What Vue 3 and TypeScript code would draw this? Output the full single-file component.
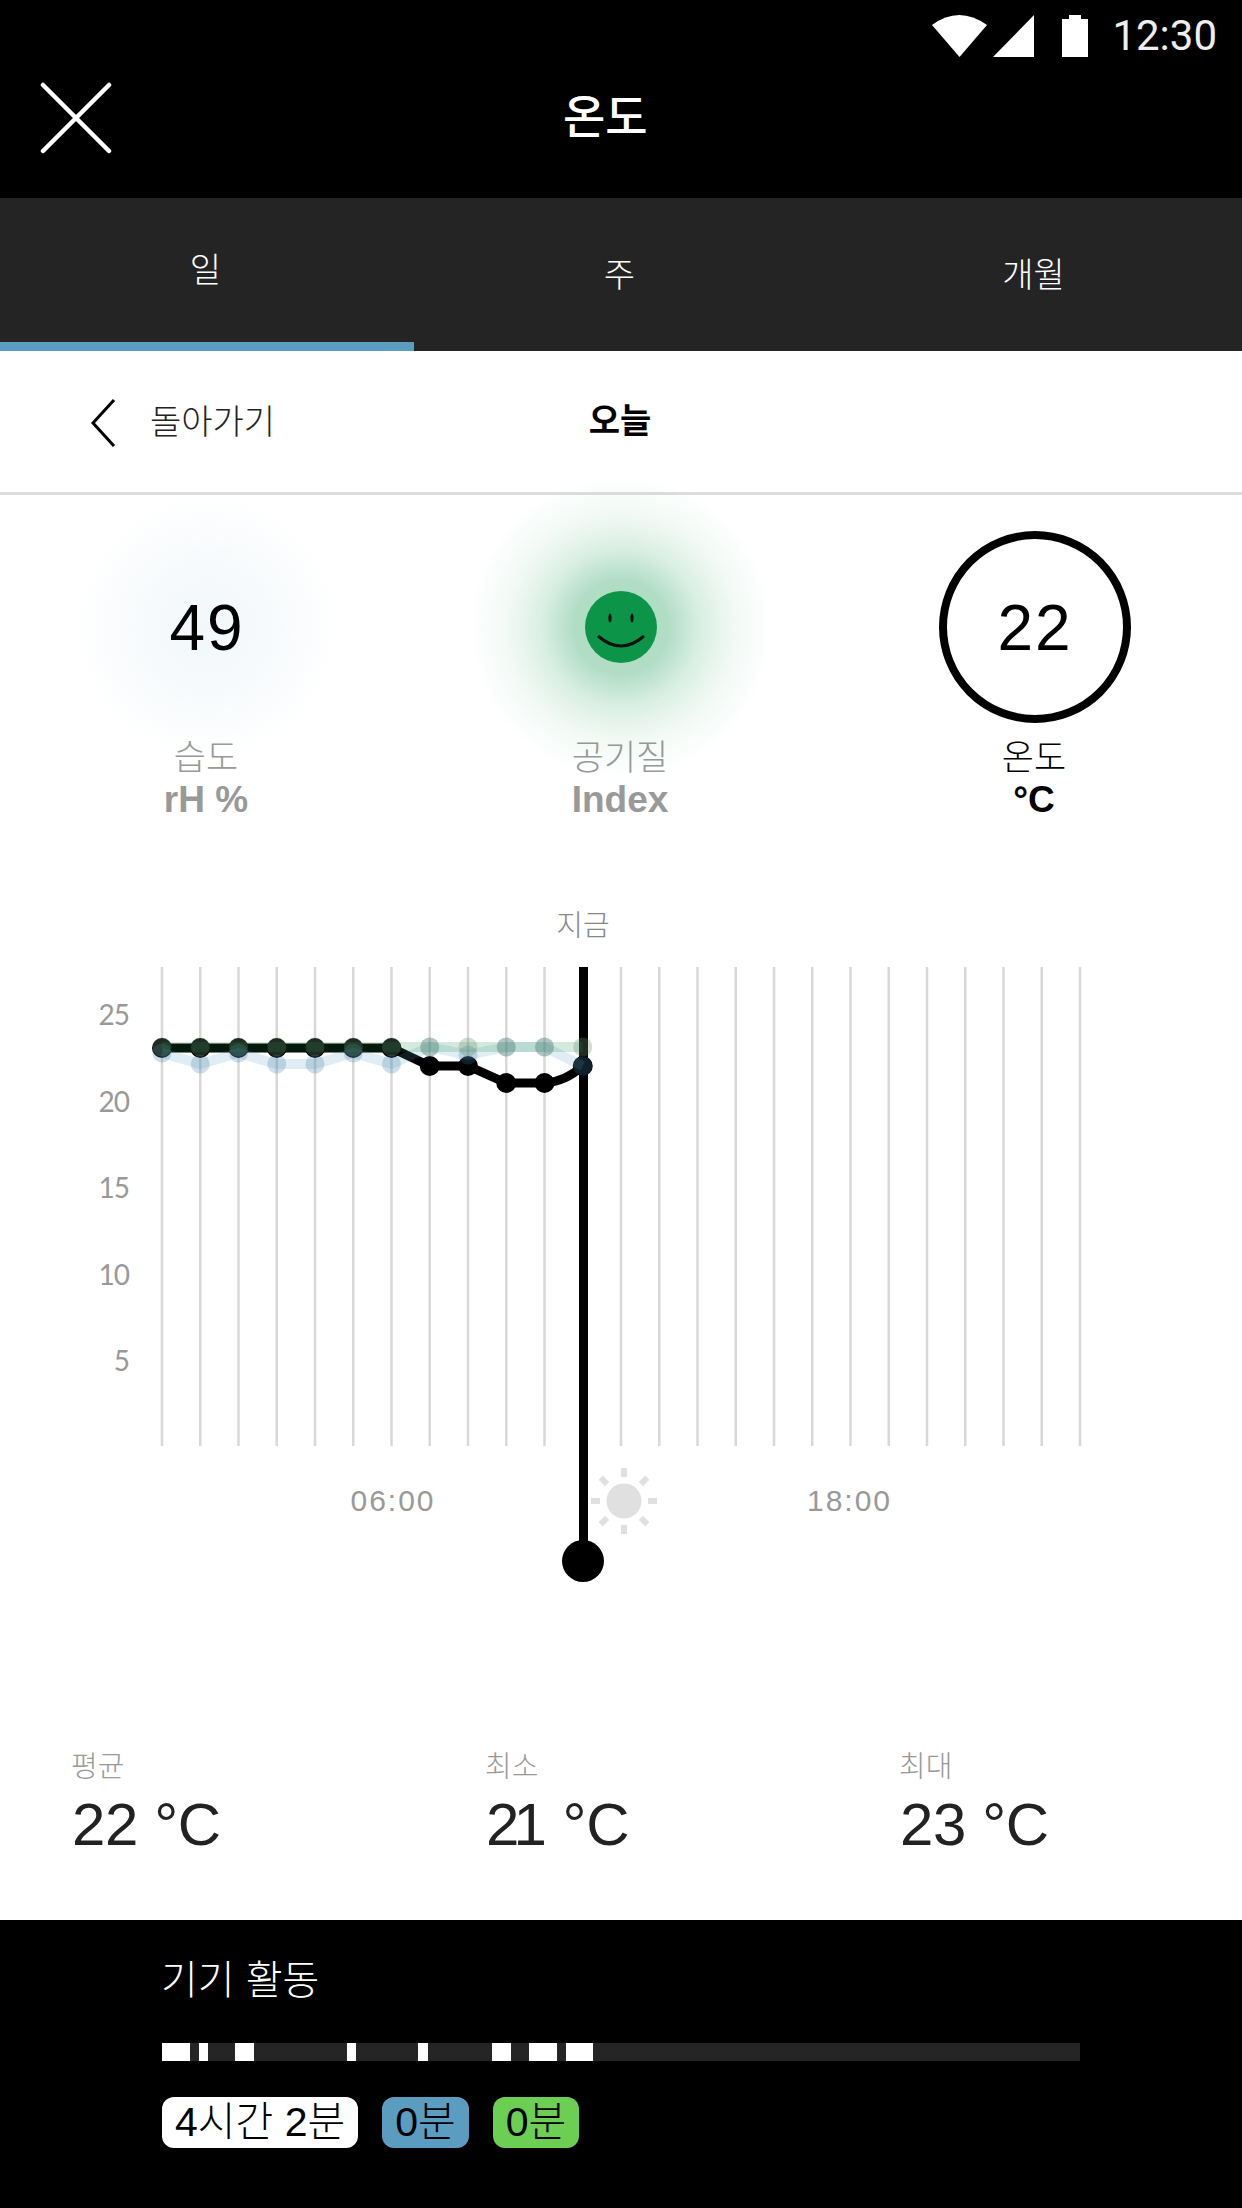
<script setup lang="ts">
const gridX: number[] = Array.from({ length: 25 }, (_, i) => 162 + i * 38.25)
const ptX = gridX.slice(0, 12)
const toY = (pix: number[]) => pix.map((y, i) => ({ x: ptX[i], y }))
const black = toY([1048, 1048, 1048, 1048, 1048, 1048, 1048, 1066, 1066, 1083, 1083, 1066])
const blue = toY([1053, 1064, 1053, 1064, 1064, 1053, 1064, 1047, 1055, 1047, 1047, 1066])
const green = toY(Array(12).fill(1047))
const pts = (a: { x: number; y: number }[]) => a.map((p) => `${p.x},${p.y}`).join(' ')
const blackPath = (() => {
  const a = black.slice(0, 11)
  const last = black[11]
  return 'M' + a.map((p) => `${p.x} ${p.y}`).join(' L') + ` Q${last.x - 18} ${last.y + 16} ${last.x} ${last.y}`
})()
const yLabels = [
  { t: '25', y: 1014 },
  { t: '20', y: 1101 },
  { t: '15', y: 1187 },
  { t: '10', y: 1274 },
  { t: '5', y: 1360 },
]
const rays = [0, 45, 90, 135, 180, 225, 270, 315]
const stats = [
  { label: '평균', lead: '2', value: '2 °C', kern: false },
  { label: '최소', lead: '2', value: '1 °C', kern: true },
  { label: '최대', lead: '2', value: '3 °C', kern: false },
]
const segments = [
  [162, 190], [199, 208], [235, 254], [347, 356], [418, 428], [492, 511], [529, 557], [566, 593],
]
const segStyle = (s: number[]) => ({ left: `${s[0] - 162}px`, width: `${s[1] - s[0]}px` })
</script>

<template>
  <div class="screen">
    <header class="top">
      <div class="status">
        <svg class="status-icons" width="156" height="42" viewBox="0 0 156 42">
          <path d="M0 10 Q27 -10 55 10 L27.5 42 Z" fill="#fff" />
          <path d="M61 42 L102 0 V42 Z" fill="#fff" />
          <path d="M130 42 V4 H137 V0 H149 V4 H156 V42 Z" fill="#fff" />
        </svg>
        <span class="clock">12:30</span>
      </div>
      <div class="titlebar">
        <svg class="close" width="72" height="72" viewBox="0 0 72 72">
          <path d="M3 3 L69 69 M69 3 L3 69" stroke="#fff" stroke-width="4.5" stroke-linecap="round" />
        </svg>
        <h1 class="title">온도</h1>
      </div>
    </header>

    <nav class="tabs">
      <div class="tab active">일<i class="tab-bar"></i></div>
      <div class="tab">주</div>
      <div class="tab">개월</div>
    </nav>

    <div class="dayrow">
      <div class="back">
        <svg width="26" height="48" viewBox="0 0 26 48">
          <path d="M24 1 L3 24 L24 47" fill="none" stroke="#000" stroke-width="3" />
        </svg>
        <span class="back-text">돌아가기</span>
      </div>
      <div class="today">오늘</div>
    </div>

    <section class="metrics">
      <div class="metric">
        <div class="dial glow-blue"><span class="num">49</span></div>
        <div class="m-label">습도</div>
        <div class="m-unit">rH %</div>
      </div>
      <div class="metric">
        <div class="dial glow-green">
          <svg class="face" width="72" height="72" viewBox="0 0 72 72">
            <circle cx="36" cy="36" r="36" fill="#0c9549" />
            <ellipse cx="25" cy="27" rx="1.6" ry="4.5" fill="#111" />
            <ellipse cx="47" cy="27" rx="1.6" ry="4.5" fill="#111" />
            <path d="M13 45 Q36 65 59 45" fill="none" stroke="#111" stroke-width="3" />
          </svg>
        </div>
        <div class="m-label">공기질</div>
        <div class="m-unit">Index</div>
      </div>
      <div class="metric on">
        <div class="dial ring"><span class="num">22</span></div>
        <div class="m-label">온도</div>
        <div class="m-unit">°C</div>
      </div>
    </section>

    <svg class="chart" width="1242" height="700" viewBox="0 900 1242 700">
      <text x="583" y="936" class="now-label" text-anchor="middle">지금</text>
      <line v-for="x in gridX" :key="x" :x1="x" :x2="x" y1="967" y2="1446" stroke="#d8d8d8" stroke-width="2.5" />
      <text v-for="l in yLabels" :key="l.t" x="129" :y="l.y + 11" class="y-label" text-anchor="end">{{ l.t }}</text>

      <line x1="583.5" x2="583.5" y1="967" y2="1561" stroke="#000" stroke-width="9" />
      <circle cx="583" cy="1561" r="21" fill="#000" />

      <path :d="blackPath" fill="none" stroke="#000" stroke-width="9" />
      <circle v-for="p in black" :key="'k' + p.x" :cx="p.x" :cy="p.y" r="10" fill="#000" />

      <polyline class="tint-line" :points="pts(blue)" fill="none" stroke="#5b9dc0" stroke-width="10" />
      <circle v-for="p in blue" :key="'b' + p.x" class="dot-blue" :cx="p.x" :cy="p.y" r="9.5" fill="#3a80a8" />
      <polyline class="tint-line" :points="pts(green)" fill="none" stroke="#0c8a44" stroke-width="10" />
      <circle v-for="p in green" :key="'g' + p.x" class="dot-green" :cx="p.x" :cy="p.y" r="9.5" fill="#6a8f70" />

      <text x="393" y="1511" class="time" text-anchor="middle">06:00</text>
      <text x="849.5" y="1511" class="time" text-anchor="middle">18:00</text>

      <g transform="translate(624 1501)" fill="#e0e0e0">
        <circle r="17.5" />
        <rect v-for="r in rays" :key="r" x="-3" y="-33" width="6" height="9" :transform="`rotate(${r})`" />
      </g>
    </svg>

    <section class="stats">
      <div v-for="s in stats" :key="s.label" class="stat">
        <div class="stat-label">{{ s.label }}</div>
        <div class="stat-value"><span :class="{ kern: s.kern }">{{ s.lead }}</span>{{ s.value }}</div>
      </div>
    </section>

    <footer class="activity">
      <div class="act-title">기기 활동</div>
      <div class="act-bar">
        <i v-for="s in segments" :key="s[0]" class="act-seg" :style="segStyle(s)"></i>
      </div>
      <div class="pills">
        <span class="pill white">4시간 2분</span>
        <span class="pill blue">0분</span>
        <span class="pill green">0분</span>
      </div>
    </footer>
  </div>
</template>

<style scoped>
.screen {
  width: 1242px;
  height: 2208px;
  overflow: hidden;
  background: #fff;
  font-family: "Liberation Sans", "Noto Sans CJK KR", sans-serif;
  color: #000;
}
.top {
  height: 198px;
  background: #000;
  color: #fff;
}
.status {
  height: 72px;
  display: flex;
  justify-content: flex-end;
  padding: 15px 25px 0 0;
  box-sizing: border-box;
  gap: 24px;
}
.status-icons {
  display: block;
}
.clock {
  font-family: Roboto, sans-serif;
  font-size: 42px;
  line-height: 42px;
  color: #eee;
}
.titlebar {
  height: 126px;
  display: flex;
  align-items: flex-start;
  padding-left: 40px;
}
.close {
  display: block;
  margin-top: 10px;
}
.title {
  margin: 20px 0 0 451px;
  font-size: 46px;
  line-height: 50px;
  font-weight: 500;
}
.tabs {
  height: 153px;
  background: #242424;
  color: #fff;
  display: grid;
  grid-template-columns: repeat(3, 414px);
}
.tab {
  position: relative;
  text-align: center;
  font-size: 34px;
  line-height: 40px;
  font-weight: 300;
  padding: 57px 3px 0 0;
}
.tab.active {
  padding-top: 52px;
}
.tab-bar {
  position: absolute;
  left: 0;
  right: 0;
  bottom: 0;
  height: 9px;
  background: #5b9dc0;
}
.dayrow {
  height: 144px;
  box-sizing: border-box;
  border-bottom: 3px solid #ddd;
  position: relative;
  display: flex;
  align-items: center;
  justify-content: center;
}
.back {
  position: absolute;
  left: 90px;
  top: 48px;
  display: flex;
  align-items: center;
  gap: 34px;
  font-size: 34px;
  font-weight: 300;
  color: #222;
}
.back-text {
  margin-top: -8px;
}
.today {
  font-size: 34px;
  font-weight: 700;
  margin: 0 2px 6px 0;
}
.metrics {
  height: 405px;
  box-sizing: border-box;
  padding-top: 36px;
  display: grid;
  grid-template-columns: repeat(3, 414px);
  text-align: center;
}
.metric {
  display: flex;
  flex-direction: column;
  align-items: center;
  color: #999;
}
.metric.on {
  color: #000;
}
.dial {
  position: relative;
  width: 192px;
  height: 192px;
  box-sizing: border-box;
  display: flex;
  align-items: center;
  justify-content: center;
  margin-bottom: 13px;
  color: #000;
}
.glow-blue::before,
.glow-green::before {
  content: "";
  position: absolute;
  left: -54px;
  top: -54px;
  width: 300px;
  height: 300px;
  border-radius: 50%;
}
.glow-blue::before {
  background: radial-gradient(circle, rgba(91, 157, 192, 0.08) 0, rgba(91, 157, 192, 0.05) 30%, rgba(91, 157, 192, 0) 62%);
}
.glow-green::before {
  background: radial-gradient(circle, rgba(12, 149, 73, 0.32) 22%, rgba(12, 149, 73, 0.15) 38%, rgba(12, 149, 73, 0.05) 54%, rgba(12, 149, 73, 0) 72%);
}
.ring {
  border: 8px solid #000;
  border-radius: 50%;
}
.num {
  position: relative;
  font-size: 64px;
  letter-spacing: 2px;
  margin-top: 2px;
}
.face {
  position: relative;
  display: block;
}
.m-label {
  font-size: 35px;
  line-height: 44px;
  font-weight: 300;
  margin-right: 2px;
}
.m-unit {
  font-size: 37px;
  line-height: 40px;
  font-weight: 700;
  margin-right: 2px;
}
.chart {
  display: block;
}
.tint-line {
  opacity: 0.18;
}
.dot-blue {
  opacity: 0.25;
}
.dot-green {
  opacity: 0.3;
}
.now-label {
  font-size: 29px;
  font-weight: 300;
  fill: #888;
}
.y-label {
  font-family: Lato, sans-serif;
  font-size: 28px;
  letter-spacing: -1px;
  fill: #999;
}
.time {
  font-size: 30px;
  letter-spacing: 2px;
  fill: #999;
}
.stats {
  height: 320px;
  box-sizing: border-box;
  padding: 149px 0 0 72px;
  display: grid;
  grid-template-columns: repeat(3, 414px);
}
.stat-label {
  font-size: 29px;
  line-height: 36px;
  font-weight: 300;
  color: #999;
  margin-left: -1px;
}
.stat-value {
  margin-top: 8px;
  font-size: 60px;
  line-height: 64px;
  letter-spacing: -0.4px;
  color: #222;
}
.kern {
  letter-spacing: -6px;
}
.activity {
  height: 288px;
  box-sizing: border-box;
  background: #000;
  color: #fff;
  padding: 32px 162px 0;
}
.act-title {
  font-size: 40px;
  line-height: 56px;
  font-weight: 300;
  margin-left: -1px;
}
.act-bar {
  position: relative;
  height: 18px;
  margin-top: 35px;
  background: #252525;
}
.act-seg {
  position: absolute;
  top: 0;
  bottom: 0;
  background: #fff;
}
.pills {
  display: flex;
  gap: 24px;
  margin-top: 36px;
}
.pill {
  height: 51px;
  line-height: 50px;
  font-size: 41px;
  font-weight: 300;
  color: #000;
  border-radius: 12px;
  padding: 0 13px;
  box-sizing: border-box;
}
.pill.white {
  background: #fff;
}
.pill.blue {
  background: #5b9dc0;
}
.pill.green {
  background: #6ccf54;
}
</style>
